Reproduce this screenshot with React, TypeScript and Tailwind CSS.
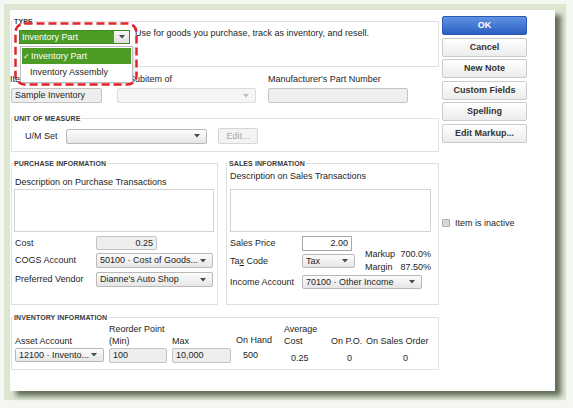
import React from 'react'

// Small dark caret used by the combo boxes
function Caret({ muted = false }: { muted?: boolean }) {
  return (
    <svg width="6" height="4" viewBox="0 0 6 4" className="shrink-0">
      <path d="M0 0h6L3 3.5z" fill={muted ? '#bdbdbd' : '#4a4a4a'} />
    </svg>
  )
}

interface SelectProps {
  value?: string
  className?: string
  disabled?: boolean
}

function Select({ value = '', className = '', disabled = false }: SelectProps) {
  return (
    <div
      className={`flex items-center justify-between rounded-[2px] border pl-[3px] pr-[6px] ${
        disabled ? 'border-[#dcdcdc] bg-[#f5f5f5]' : 'border-[#b9b9b9] bg-linear-to-b from-[#fcfcfc] to-[#e6e6e6]'
      } ${className}`}
    >
      <span className="truncate">{value}</span>
      <Caret muted={disabled} />
    </div>
  )
}

function Input({ value = '', className = '' }: { value?: string; className?: string }) {
  return (
    <div className={`flex items-center rounded-[2px] border border-[#c3c3c3] bg-[#eeeeee] px-[3px] ${className}`}>
      {value}
    </div>
  )
}

function Group({ title, className = '', children }: { title: string; className?: string; children?: React.ReactNode }) {
  return (
    <fieldset className={`border border-[#e0e0e0] ${className}`}>
      <legend className="ml-[1px] px-[1px] text-[7px] leading-[9px] font-bold tracking-[0.1px] text-[#3a3a3a]">{title}</legend>
      {children}
    </fieldset>
  )
}

function Button({ label, primary = false }: { label: string; primary?: boolean }) {
  return (
    <div
      className={`flex h-[19px] items-center justify-center rounded-[2px] border text-[9px] font-bold ${
        primary
          ? 'border-[#2b57b2] bg-linear-to-b from-[#5f93e3] to-[#2c5fc2] text-white'
          : 'border-[#cacaca] bg-linear-to-b from-white to-[#ececec] text-[#333]'
      }`}
    >
      {label}
    </div>
  )
}

export default function App() {
  return (
    <div className="h-[408px] w-[573px] bg-[#f4f7f1] pt-[4px] pl-[4px] font-['Liberation_Sans',Arial,sans-serif] text-[9px] leading-[11px] text-[#1e1e1e]">
      <div className="h-[396px] w-[562px] bg-[#dce6d1] pt-[6px] pl-[6px]">
        <div className="relative flex h-[381px] w-[545px] bg-white shadow-[6px_5px_5px_rgba(78,88,68,0.85)]">
          {/* left column */}
          <div className="ml-[1px] flex w-[428px] flex-col">
            <Group title="TYPE" className="mt-[7px] h-[50px]">
              <div className="mt-[4px] flex items-start pl-[7px]">
                <div className="flex h-[14px] w-[111px] border border-[#3f8a1c]">
                  <div className="flex flex-1 items-center bg-[#4d9c25] pl-[2px] text-white">Inventory Part</div>
                  <div className="flex w-[15px] items-center justify-center bg-linear-to-b from-[#f7f7f7] to-[#dedede]">
                    <Caret />
                  </div>
                </div>
                <div className="-mt-[2px] ml-[5px]">Use for goods you purchase, track as inventory, and resell.</div>
              </div>
            </Group>

            <div className="mt-[7px] flex">
              <div className="w-[91px]">
                <div className="-ml-[1px]">Item Name/Number</div>
                <Input value="Sample Inventory" className="mt-[3px] h-[15px]" />
              </div>
              <div className="ml-[15px] w-[139px]">
                <div className="pl-[12px]">Subitem of</div>
                <Select disabled className="mt-[3px] h-[15px]" />
              </div>
              <div className="ml-[12px] w-[140px]">
                <div>Manufacturer's Part Number</div>
                <Input className="mt-[3px] h-[15px] bg-[#efefef]" />
              </div>
            </div>

            <Group title="UNIT OF MEASURE" className="mt-[11px] h-[38px]">
              <div className="mt-[5px] flex items-center pl-[13px]">
                <div className="w-[41px]">U/M Set</div>
                <Select className="h-[15px] w-[141px]" />
                <div className="ml-[11px] flex h-[16px] w-[40px] items-center justify-center rounded-[2px] border border-[#d6d6d6] bg-[#f3f3f3] text-[#a8a8a8]">
                  Edit...
                </div>
              </div>
            </Group>

            <div className="mt-[7px] flex">
              <Group title="PURCHASE INFORMATION" className="h-[146px] w-[207px]">
                <div className="px-[3px]">
                  <div className="mt-[9px]">Description on Purchase Transactions</div>
                  <div className="mt-[1px] -ml-[1px] h-[43px] w-[200px] border border-[#d3d3d3] bg-white" />
                  <div className="mt-[4px] flex items-center">
                    <div className="w-[81px]">Cost</div>
                    <Input value="0.25" className="h-[14px] w-[61px] justify-end" />
                  </div>
                  <div className="mt-[3px] flex items-center">
                    <div className="w-[81px]">COGS Account</div>
                    <Select value="50100 · Cost of Goods..." className="h-[15px] w-[117px]" />
                  </div>
                  <div className="mt-[4px] flex items-center">
                    <div className="w-[81px]">Preferred Vendor</div>
                    <Select value="Dianne's Auto Shop" className="h-[15px] w-[117px]" />
                  </div>
                </div>
              </Group>

              <Group title="SALES INFORMATION" className="ml-[8px] h-[146px] w-[213px]">
                <div className="px-[3px]">
                  <div className="mt-[3px]">Description on Sales Transactions</div>
                  <div className="mt-[7px] h-[43px] w-[201px] border border-[#d3d3d3] bg-white" />
                  <div className="mt-[4px] flex items-center">
                    <div className="w-[72px]">Sales Price</div>
                    <div className="flex h-[15px] w-[50px] items-center justify-end border border-[#a8a8a8] bg-white px-[3px]">2.00</div>
                  </div>
                  <div className="mt-[3px] flex h-[14px] items-center">
                    <div className="w-[72px]">
                      Ta<span className="underline">x</span> Code
                    </div>
                    <Select value="Tax" className="h-[14px] w-[53px]" />
                    <div className="ml-[10px] grid w-[66px] grid-cols-[auto_1fr] leading-[13px]">
                      <span>Markup</span>
                      <span className="text-right">700.0%</span>
                      <span>Margin</span>
                      <span className="text-right">87.50%</span>
                    </div>
                  </div>
                  <div className="mt-[7px] flex items-center">
                    <div className="w-[72px]">Income Account</div>
                    <Select value="70100 · Other Income" className="h-[14px] w-[120px]" />
                  </div>
                </div>
              </Group>
            </div>

            <Group title="INVENTORY INFORMATION" className="mt-[8px] h-[57px]">
              <div className="mt-[1px] flex pl-[3px]">
                <div className="w-[94px]">
                  <div className="flex h-[24px] items-end">Asset Account</div>
                  <Select value="12100 · Invento..." className="mt-[1px] h-[14px] w-[89px]" />
                </div>
                <div className="w-[63px]">
                  <div className="h-[24px] leading-[12px]">
                    Reorder Point
                    <br />
                    (Min)
                  </div>
                  <Input value="100" className="mt-[1px] h-[15px] w-[58px]" />
                </div>
                <div className="w-[64px]">
                  <div className="flex h-[24px] items-end">Max</div>
                  <Input value="10,000" className="mt-[1px] h-[15px] w-[59px]" />
                </div>
                <div className="w-[48px]">
                  <div className="flex h-[23px] items-end">On Hand</div>
                  <div className="mt-[4px] pl-[7px]">500</div>
                </div>
                <div className="w-[47px]">
                  <div className="h-[24px] leading-[12px]">
                    Average
                    <br />
                    Cost
                  </div>
                  <div className="mt-[6px] pl-[7px]">0.25</div>
                </div>
                <div className="w-[35px]">
                  <div className="flex h-[24px] items-end">On P.O.</div>
                  <div className="mt-[6px] pl-[16px]">0</div>
                </div>
                <div className="w-[72px]">
                  <div className="flex h-[24px] items-end">On Sales Order</div>
                  <div className="mt-[6px] pl-[37px]">0</div>
                </div>
              </div>
            </Group>
          </div>

          {/* right column */}
          <div className="mt-[6px] ml-[3px] flex w-[85px] flex-col">
            <div className="flex flex-col gap-[2.6px]">
              <Button label="OK" primary />
              <Button label="Cancel" />
              <Button label="New Note" />
              <Button label="Custom Fields" />
              <Button label="Spelling" />
              <Button label="Edit Markup..." />
            </div>
            <div className="mt-[75px] flex items-center">
              <div className="h-[8px] w-[8px] rounded-[1px] border border-[#adadad] bg-[#d8d8d8]" />
              <span className="ml-[5px]">Item is inactive</span>
            </div>
          </div>

          {/* open type list */}
          <div className="absolute top-[36px] left-[10px] h-[37px] w-[113px] border border-[#bdbdbd] bg-white p-[1px] shadow-[1px_1px_2px_rgba(0,0,0,0.15)]">
            <div className="flex h-[16px] items-center bg-[#4d9c25] pl-[1px] text-white">
              <span className="text-[8px]">✓</span>
              <span className="ml-[1px]">Inventory Part</span>
            </div>
            <div className="flex h-[17px] items-center pl-[8px]">Inventory Assembly</div>
          </div>

          {/* red dashed callout */}
          <svg className="absolute top-[12px] left-[4px]" width="124" height="64" viewBox="0 0 124 64">
            <rect x="1.5" y="1.5" width="121" height="61" rx="9" fill="none" stroke="#e2242a" strokeWidth="2.5" strokeDasharray="8 4" />
          </svg>
        </div>
      </div>
    </div>
  )
}
